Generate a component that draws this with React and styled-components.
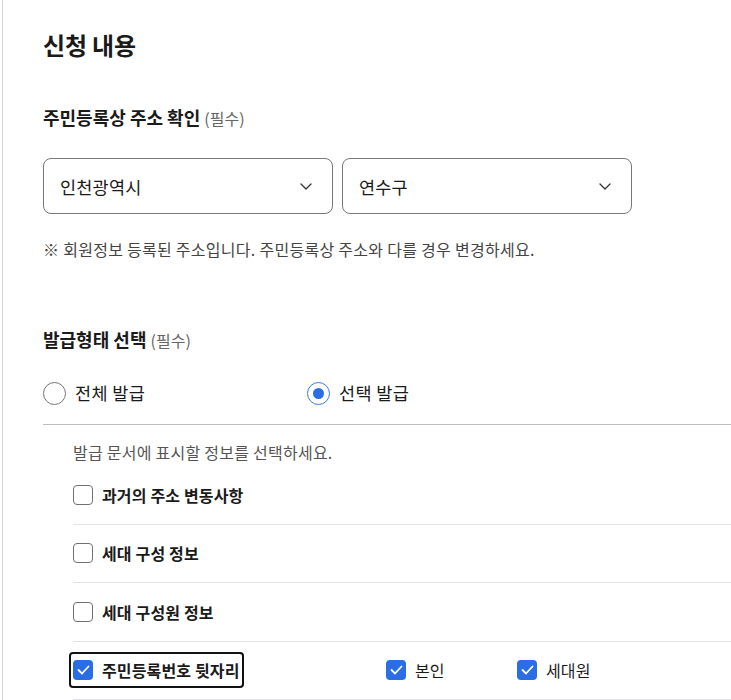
import React, { useState } from 'react'
import styled, { createGlobalStyle } from 'styled-components'

const GlobalStyle = createGlobalStyle`
  html, body {
    margin: 0;
    padding: 0;
    background: #fff;
  }
  body {
    font-family: "Noto Sans CJK KR", "Noto Sans", sans-serif;
    color: #1a1a1a;
  }
  * {
    box-sizing: border-box;
  }
`

const Panel = styled.section`
  margin-left: 2px;
  border-left: 1px solid #d2d2d2;
  padding: 28px 0 0 40px;
  min-height: 700px;
`

const Title = styled.h2`
  margin: 0;
  font-size: 24px;
  line-height: 34px;
  font-weight: 700;
  letter-spacing: -0.2px;
`

const Label = styled.h3`
  margin: ${({ $top }) => $top}px 0 0;
  font-size: 18px;
  line-height: 24px;
  font-weight: 700;

  small {
    font-size: 16px;
    font-weight: 400;
    color: #666;
  }
`

const SelectRow = styled.div`
  display: flex;
  gap: 9px;
  margin-top: 28px;
`

const Select = styled.div`
  width: 290px;
  height: 56px;
  border: 1px solid #777;
  border-radius: 8px;
  display: flex;
  align-items: center;
  justify-content: space-between;
  padding: 0 20px 0 16px;
  font-size: 17.5px;
  letter-spacing: 0.2px;
  cursor: pointer;
`

const Note = styled.p`
  margin: 24px 0 0;
  font-size: 16px;
  line-height: 22px;
  letter-spacing: 0.28px;
  color: #444;
`

const RadioGroup = styled.div`
  display: flex;
  margin-top: 29px;
  padding-bottom: 19px;
  border-bottom: 1px solid #bdbdbd;
`

const RadioOption = styled.label`
  width: 264px;
  display: flex;
  align-items: center;
  gap: 9px;
  font-size: 17.5px;
  line-height: 24px;
  letter-spacing: 0.4px;
  cursor: pointer;
`

const RadioCircle = styled.span`
  width: 23px;
  height: 23px;
  border-radius: 50%;
  border: 1.5px solid ${({ $on }) => ($on ? '#3a7be9' : '#767676')};
  display: flex;
  align-items: center;
  justify-content: center;

  &::after {
    content: '';
    width: 11px;
    height: 11px;
    border-radius: 50%;
    background: ${({ $on }) => ($on ? '#2b6de5' : 'transparent')};
  }
`

const Options = styled.div`
  padding-left: 30px;
`

const Hint = styled.p`
  margin: 16px 0 3px;
  font-size: 16px;
  line-height: 22px;
  letter-spacing: 0.25px;
  color: #555;
`

const Row = styled.div`
  height: 58.5px;
  display: flex;
  align-items: center;
  border-bottom: 1px solid #e3e3e8;
`

const MainCell = styled.div`
  width: 313px;
  margin-left: -4px;
  display: flex;
`

const CheckItem = styled.label`
  display: flex;
  align-items: center;
  gap: 9px;
  font-size: 16px;
  letter-spacing: 0.15px;
  font-weight: ${({ $bold }) => ($bold ? 700 : 400)};
  padding: 4px 2px;
  border: 2px solid ${({ $focus }) => ($focus ? '#111' : 'transparent')};
  border-radius: 4px;
  cursor: pointer;
`

const Box = styled.span`
  width: 20px;
  height: 20px;
  border-radius: 4px;
  border: ${({ $on }) => ($on ? 'none' : '1.5px solid #707070')};
  background: ${({ $on }) => ($on ? '#2b6de5' : '#fff')};
  display: flex;
  align-items: center;
  justify-content: center;
`

const SubItem = styled(CheckItem)`
  width: 131px;
`

const Chevron = () => (
  <svg width="12" height="7" viewBox="0 0 12 7" fill="none">
    <path d="M1 1l5 5 5-5" stroke="#333" strokeWidth="1.3" strokeLinecap="round" strokeLinejoin="round" />
  </svg>
)

const Check = ({ on }) => (
  <Box $on={on}>
    {on && (
      <svg width="13" height="10" viewBox="0 0 13 10" fill="none">
        <path d="M1.5 5l3.5 3.5 6.5-7" stroke="#fff" strokeWidth="1.8" strokeLinecap="round" strokeLinejoin="round" />
      </svg>
    )}
  </Box>
)

const items = ['과거의 주소 변동사항', '세대 구성 정보', '세대 구성원 정보']

export default function App() {
  const [mode, setMode] = useState('select')
  const [checks, setChecks] = useState({ 주민등록번호: true, 본인: true, 세대원: true })
  const toggle = (k) => setChecks((c) => ({ ...c, [k]: !c[k] }))

  return (
    <>
      <GlobalStyle />
      <Panel>
        <Title>신청 내용</Title>

        <Label $top={43}>
          주민등록상 주소 확인 <small>(필수)</small>
        </Label>
        <SelectRow>
          <Select>
            인천광역시
            <Chevron />
          </Select>
          <Select>
            연수구
            <Chevron />
          </Select>
        </SelectRow>
        <Note>※ 회원정보 등록된 주소입니다. 주민등록상 주소와 다를 경우 변경하세요.</Note>

        <Label $top={67}>
          발급형태 선택 <small>(필수)</small>
        </Label>
        <RadioGroup>
          <RadioOption onClick={() => setMode('all')}>
            <RadioCircle $on={mode === 'all'} />
            전체 발급
          </RadioOption>
          <RadioOption onClick={() => setMode('select')}>
            <RadioCircle $on={mode === 'select'} />
            선택 발급
          </RadioOption>
        </RadioGroup>

        <Options>
          <Hint>발급 문서에 표시할 정보를 선택하세요.</Hint>
          {items.map((t) => (
            <Row key={t}>
              <MainCell>
                <CheckItem $bold onClick={() => toggle(t)}>
                  <Check on={!!checks[t]} />
                  {t}
                </CheckItem>
              </MainCell>
            </Row>
          ))}
          <Row>
            <MainCell>
              <CheckItem $bold $focus onClick={() => toggle('주민등록번호')}>
                <Check on={checks['주민등록번호']} />
                주민등록번호 뒷자리
              </CheckItem>
            </MainCell>
            <SubItem onClick={() => toggle('본인')}>
              <Check on={checks['본인']} />
              본인
            </SubItem>
            <SubItem onClick={() => toggle('세대원')}>
              <Check on={checks['세대원']} />
              세대원
            </SubItem>
          </Row>
        </Options>
      </Panel>
    </>
  )
}
